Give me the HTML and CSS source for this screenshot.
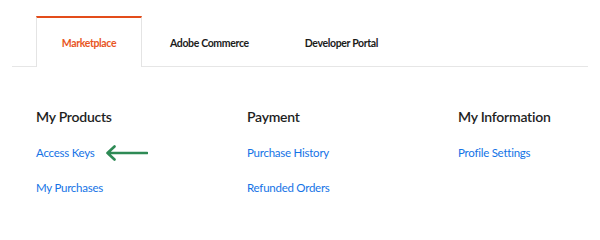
FILE: index.html
```html
<!DOCTYPE html>
<html>
<head>
<meta charset="utf-8">
<link rel="stylesheet" href="styles.css">
</head>
<body>
<div class="page">
  <nav class="tabs">
    <a class="tab active">Marketplace</a>
    <a class="tab">Adobe Commerce</a>
    <a class="tab">Developer Portal</a>
  </nav>
  <div class="columns">
    <section class="col">
      <h2>My Products</h2>
      <div class="row"><a class="link">Access Keys</a>
        <svg class="arrow" width="43" height="16" viewBox="0 0 43 16"><path d="M42 8H2.5M9.5 1.5L2.5 8l7 6.5" fill="none" stroke="#2e8a55" stroke-width="2.6" stroke-linecap="round" stroke-linejoin="round"/></svg>
      </div>
      <div class="row"><a class="link">My Purchases</a></div>
    </section>
    <section class="col">
      <h2>Payment</h2>
      <div class="row"><a class="link">Purchase History</a></div>
      <div class="row"><a class="link">Refunded Orders</a></div>
    </section>
    <section class="col">
      <h2>My Information</h2>
      <div class="row"><a class="link">Profile Settings</a></div>
    </section>
  </div>
</div>
</body>
</html>
```
FILE: styles.css
```css
html, body { margin: 0; padding: 0; background: #fff; }
body { font-family: Lato, "Noto Sans", sans-serif; color: #2c2c2c; }
.page { padding-top: 16px; }
.tabs {
  display: flex;
  margin: 0 12px;
  padding-left: 24px;
  border-bottom: 1px solid #e6e6e6;
  height: 50px;
}
.tab {
  display: flex;
  align-items: center;
  justify-content: center;
  padding: 0 27px;
  font-size: 10.5px;
  letter-spacing: -0.35px;
  font-weight: 700;
  color: #1b1b1b;
  box-sizing: border-box;
  border-top: 2px solid transparent;
  border-left: 1px solid transparent;
  border-right: 1px solid transparent;
  height: 51px;
}
.tab.active {
  color: #e8561f;
  border-top-color: #e34c1a;
  border-left-color: #e4e4e4;
  border-right-color: #e4e4e4;
  background: #fff;
  width: 106px;
  padding: 0;
}
.columns {
  display: grid;
  grid-template-columns: 211px 211px auto;
  padding-left: 36px;
  padding-top: 40px;
}
.col h2 {
  margin: 0 0 8px;
  font-size: 14px;
  letter-spacing: -0.25px;
  font-weight: 600;
  color: #1e1e1e;
  line-height: 20px;
}
.row {
  display: flex;
  align-items: center;
  gap: 10px;
  height: 35px;
}
.link {
  font-size: 11.5px;
  letter-spacing: -0.25px;
  color: #1473e6;
  line-height: 16px;
}
.arrow { display: block; }
```
